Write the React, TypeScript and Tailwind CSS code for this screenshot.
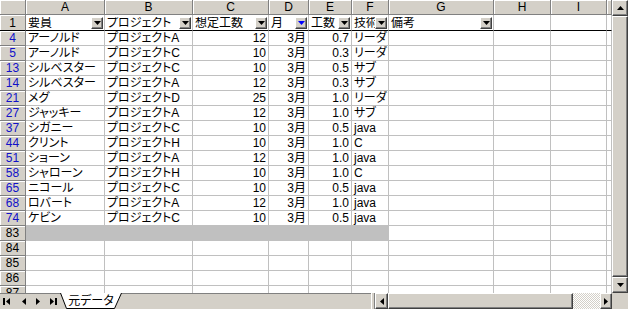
import React from 'react';

const W = ['w-[79px]', 'w-[88px]', 'w-[76px]', 'w-[40px]', 'w-[43px]', 'w-[37px]', 'w-[105px]', 'w-[57px]', 'w-[56px]', 'w-[5px]'];
const LETTERS = ['A', 'B', 'C', 'D', 'E', 'F', 'G', 'H', 'I', ''];
const HEADS = ['要員', 'プロジェクト', '想定工数', '月', '工数', '技術', '備考'];

const data: [number, string, string, string, string, string, string][] = [
  [4, 'アーノルド', 'プロジェクトA', '12', '3月', '0.7', 'リーダ'],
  [5, 'アーノルド', 'プロジェクトC', '10', '3月', '0.3', 'リーダ'],
  [13, 'シルベスター', 'プロジェクトC', '10', '3月', '0.5', 'サブ'],
  [14, 'シルベスター', 'プロジェクトA', '12', '3月', '0.3', 'サブ'],
  [21, 'メグ', 'プロジェクトD', '25', '3月', '1.0', 'リーダ'],
  [27, 'ジャッキー', 'プロジェクトA', '12', '3月', '1.0', 'サブ'],
  [37, 'シガニー', 'プロジェクトC', '10', '3月', '0.5', 'java'],
  [44, 'クリント', 'プロジェクトH', '10', '3月', '1.0', 'C'],
  [51, 'ショーン', 'プロジェクトA', '12', '3月', '1.0', 'java'],
  [58, 'シャローン', 'プロジェクトH', '10', '3月', '1.0', 'C'],
  [65, 'ニコール', 'プロジェクトC', '10', '3月', '0.5', 'java'],
  [68, 'ロバート', 'プロジェクトA', '12', '3月', '1.0', 'java'],
  [74, 'ケビン', 'プロジェクトC', '10', '3月', '0.5', 'java'],
];

const raised = 'bg-[#d4d0c8] border border-t-white border-l-white border-r-[#404040] border-b-[#404040] shadow-[inset_-1px_-1px_0_#808080]';

const Tri = ({ dir, color = '#000' }: { dir: 'up' | 'down' | 'left' | 'right'; color?: string }) => {
  const d = {
    up: 'M0 4L3.5 0L7 4z',
    down: 'M0 0h7L3.5 4z',
    left: 'M4 0v7L0 3.5z',
    right: 'M0 0v7L4 3.5z',
  }[dir];
  const vertical = dir === 'up' || dir === 'down';
  return (
    <svg width={vertical ? 7 : 4} height={vertical ? 4 : 7} viewBox={vertical ? '0 0 7 4' : '0 0 4 7'}>
      <path d={d} fill={color} />
    </svg>
  );
};

const RowHead = ({ n, blue, black }: { n?: number | string; blue?: boolean; black?: boolean }) => (
  <div
    className={`w-[26px] shrink-0 flex items-center justify-center bg-[#d4d0c8] border-r border-b border-r-[#808080] ${
      black ? 'border-b-black' : 'border-b-[#808080]'
    } shadow-[inset_1px_1px_0_#fff] ${blue ? 'text-[#1010c8]' : 'text-black'}`}
  >
    {n}
  </div>
);

const Drop = ({ blue }: { blue?: boolean }) => (
  <div className={`w-[12px] h-[12px] shrink-0 mr-[1px] flex items-center justify-center ${raised}`}>
    <Tri dir="down" color={blue ? '#0000ff' : '#000'} />
  </div>
);

const GridRow = ({ n, cells, gray, blue }: { n: number; cells?: string[]; gray?: boolean; blue?: boolean }) => (
  <div className="flex h-[15px] shrink-0">
    <RowHead n={n} blue={blue} />
    {W.map((w, i) => {
      const v = cells?.[i] ?? '';
      const right = i >= 2 && i <= 4;
      const fill = gray && i < 6;
      return (
        <div
          key={i}
          className={`${w} shrink-0 flex items-center overflow-hidden whitespace-nowrap border-r border-b border-[#c0c0c0] ${
            fill ? 'bg-[#c0c0c0]' : 'bg-white'
          } ${right ? 'justify-end pr-[2px]' : 'pl-[2px]'}`}
        >
          {v}
        </div>
      );
    })}
  </div>
);

export default function App() {
  return (
    <div className="w-[628px] h-[309px] flex flex-col overflow-hidden bg-white text-black text-[12px] leading-none font-['Liberation_Sans','Noto_Sans_CJK_JP',sans-serif] [font-feature-settings:'palt']">
      <div className="flex h-[293px] shrink-0">
        <div className="flex-1 flex flex-col overflow-hidden">
          {/* column letters */}
          <div className="flex h-[15px] shrink-0">
            <div className="w-[26px] shrink-0 bg-[#d4d0c8] border-r border-b border-[#808080] shadow-[inset_1px_1px_0_#fff]" />
            {W.map((w, i) => (
              <div
                key={i}
                className={`${w} shrink-0 flex items-center justify-center bg-[#d4d0c8] border-r border-b border-[#808080] shadow-[inset_1px_1px_0_#fff]`}
              >
                {LETTERS[i]}
              </div>
            ))}
          </div>

          {/* header row with filters */}
          <div className="flex h-[16px] shrink-0">
            <RowHead n={1} black />
            {W.map((w, i) => (
              <div
                key={i}
                className={`${w} shrink-0 flex items-center overflow-hidden whitespace-nowrap bg-white border-r border-r-[#c0c0c0] border-b border-b-black`}
              >
                {i < 7 && (
                  <>
                    <span className="flex-1 min-w-0 overflow-hidden pl-[2px]">{HEADS[i]}</span>
                    <Drop blue={i === 3} />
                  </>
                )}
              </div>
            ))}
          </div>

          {data.map(([n, ...cells]) => (
            <GridRow key={n} n={n} cells={cells} blue />
          ))}
          <GridRow n={83} gray />
          <GridRow n={84} />
          <GridRow n={85} />
          <GridRow n={86} />
          <GridRow n={87} />
        </div>

        {/* vertical scrollbar */}
        <div className="w-[16px] shrink-0 flex flex-col bg-[#d4d0c8]">
          <div className={`h-[16px] shrink-0 flex items-center justify-center ${raised}`}>
            <Tri dir="up" />
          </div>
          <div className={`flex-1 ${raised}`} />
          <div className={`h-[16px] shrink-0 flex items-center justify-center ${raised}`}>
            <Tri dir="down" />
          </div>
        </div>
      </div>

      {/* sheet tabs + horizontal scrollbar */}
      <div className="flex h-[16px] shrink-0 bg-[#d4d0c8]">
        <div className="w-[371px] shrink-0 flex items-center border-t border-[#808080]">
          <div className="flex items-center w-[60px] shrink-0 pl-[3px]">
            <div className="flex items-center w-[14px]">
              <div className="w-[2px] h-[7px] bg-black mr-[1px]" />
              <Tri dir="left" />
            </div>
            <div className="flex items-center justify-center w-[14px]">
              <Tri dir="left" />
            </div>
            <div className="flex items-center justify-center w-[14px]">
              <Tri dir="right" />
            </div>
            <div className="flex items-center justify-end w-[12px]">
              <Tri dir="right" />
              <div className="w-[2px] h-[7px] bg-black ml-[1px]" />
            </div>
          </div>
          <div className="relative w-[62px] h-[16px] -mt-[1px] shrink-0 flex items-center justify-center">
            <svg className="absolute inset-0" width="62" height="17" viewBox="0 0 62 17">
              <path d="M0.5 0L6.5 15.5H54.5L61.5 0" fill="#fff" stroke="#000" strokeWidth="1" />
            </svg>
            <span className="relative -mt-[1px]">元データ</span>
          </div>
        </div>
        <div className="w-[4px] shrink-0 border-l border-white border-r border-r-[#808080]" />
        <div className={`w-[13px] shrink-0 flex items-center justify-center ${raised}`}>
          <Tri dir="left" />
        </div>
        <div className={`w-[185px] shrink-0 ${raised}`} />
        <div className="w-[27px] shrink-0 bg-[repeating-conic-gradient(#ffffff_0_25%,#d4d0c8_0_50%)] bg-[length:2px_2px]" />
        <div className={`w-[12px] shrink-0 flex items-center justify-center ${raised}`}>
          <Tri dir="right" />
        </div>
        <div className="w-[16px] shrink-0 bg-[#d4d0c8]" />
      </div>
    </div>
  );
}
